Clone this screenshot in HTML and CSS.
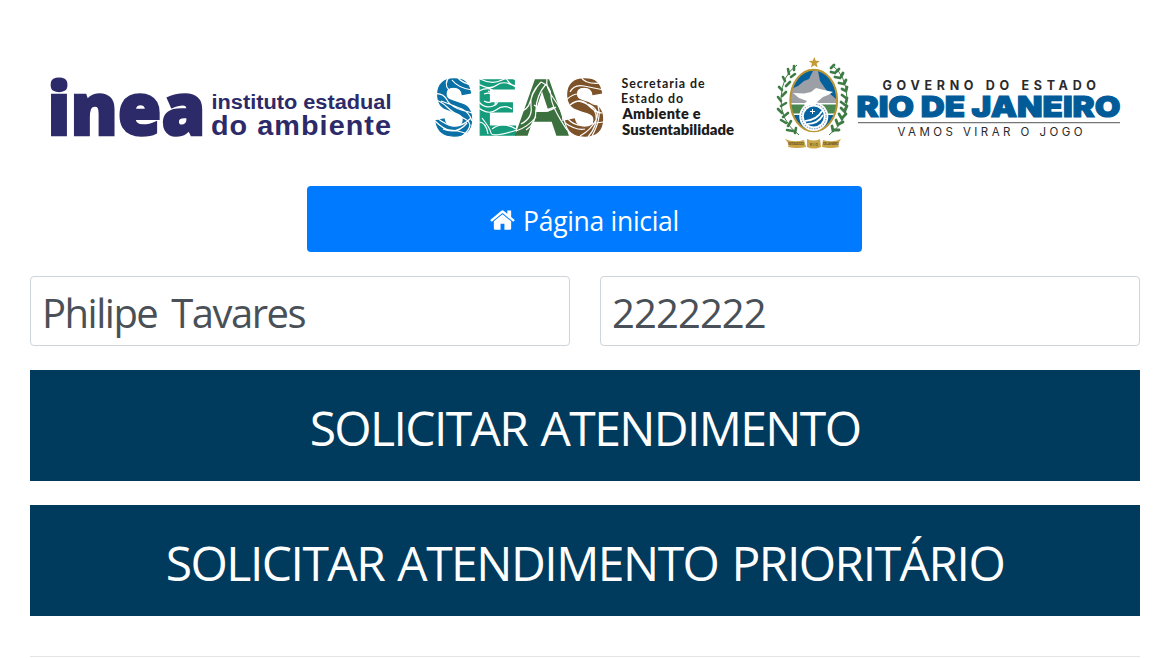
FILE: index.html
```html
<!DOCTYPE html>
<html lang="pt-BR">
<head>
<meta charset="utf-8">
<title>Solicitar atendimento</title>
<link rel="stylesheet" href="styles.css">
</head>
<body>
<main class="page">
  <header class="logos">
    <svg class="logo-inea" viewBox="50 50 343 105" role="img" aria-label="inea">
      <g fill="#2d2a69">
        <text class="inea-name" x="47.5" y="134.5" textLength="158" lengthAdjust="spacingAndGlyphs">inea</text>
        <text class="inea-sub" x="211.5" y="108.5" font-size="20" textLength="180" lengthAdjust="spacingAndGlyphs">instituto estadual</text>
        <text class="inea-sub" x="211" y="134.500" font-size="27.5" letter-spacing="1" textLength="181" lengthAdjust="spacingAndGlyphs">do ambiente</text>
      </g>
    </svg>
    <svg class="logo-seas" viewBox="434 50 302 105" role="img" aria-label="SEAS">
      <g class="seas-name">
        <text x="434" y="135" fill="#0b70a6" stroke="#0b70a6" textLength="40" lengthAdjust="spacingAndGlyphs">S</text>
        <text x="476" y="135" fill="#159c7c" stroke="#159c7c" textLength="42" lengthAdjust="spacingAndGlyphs">E</text>
        <text x="514" y="135" fill="#3c713f" stroke="#3c713f" textLength="56" lengthAdjust="spacingAndGlyphs">A</text>
        <text x="564" y="135" fill="#7d5229" stroke="#7d5229" textLength="41" lengthAdjust="spacingAndGlyphs">S</text>
      </g>
      <g fill="none" stroke="#fff" stroke-width="1.2">
        <path d="M433 94q10-2 14 6t22 12 2 26M433 99q8 2 14 8t18 12-6 20M441 101q14 5 21 8t10 12M450 76q-7 8-1 14M452 80q6 8 20 10M458 78q5 6 16 7M434 120q10 10 16 10t18 4M437 118q10 8 18 8t16-8M443 129q14 6 24-6"/>
        <path d="M477 83q12 8 20 2t22 4M480 79q12 6 22 1t16 2M479 91q12-6 17 3t-3 12-14-4M484 94q8-3 8 4t-8 3M488 91q9 4 7 14M476 106q12 10 20 4t16-1M482 118q8 10 9 15t26-3M488 134q-2-12-9-12M492 129q10-8 24 0M506 78q4 8 12 8"/>
        <path d="M521 124q12-6 10-18t10-24M526 130q10-6 10-20t10-26M519 112q9-2 11-10t7-15M516 131q12-4 20-14M541 82q10 4 10 14t16 34M547 79q-2 8 7 20t9 22M534 105q10 8 20 2M536 111q12 2 20-4"/>
        <path d="M570 92q4-8 14-6t20 4M567 99q12-10 20 0t16 2M570 105q10-8 18 0t14 8M581 77q4 8 22 6M578 101q16 4 18 14t-8 22M588 104q13 6 8 16t-16 16M598 106q4 12-6 30M565 123q12 8 20 6M567 118q8 9 18 7t18-3"/>
      </g>
      <g class="seas-sub" fill="#1c1c1c">
        <text x="621.5" y="87.5" font-size="12.4" font-weight="700" textLength="83">Secretaria de</text>
        <text x="621" y="102.5" font-size="12.4" font-weight="700" textLength="62">Estado do</text>
        <text x="622.5" y="119" font-size="14.5" font-weight="800" textLength="78">Ambiente e</text>
        <text x="622" y="135" font-size="14.5" font-weight="800" textLength="112" lengthAdjust="spacingAndGlyphs">Sustentabilidade</text>
      </g>
    </svg>
    <svg class="logo-rio" viewBox="777 50 344 105" role="img" aria-label="Governo do Estado do Rio de Janeiro">
      <defs>
        <clipPath id="oval"><ellipse cx="813.7" cy="100.5" rx="23" ry="30.5"/></clipPath>
      </defs>
      <g clip-path="url(#oval)">
        <path fill="#05609c" d="M789 68h50v70h-50z"/>
        <path fill="#9d9fa6" d="M789 103v-13l9-4 6-5 5-2 4-8h5l2 10 7 10 10 9v3z"/>
        <path fill="#4b8750" d="M789 104h50v10h-50z"/>
        <path fill="#fff" d="M789 103h50v1.6h-50zM789 113.5h50v1.6h-50z"/>
      </g>
      <ellipse cx="813.7" cy="100.5" rx="23.4" ry="30.8" fill="none" stroke="#b89532" stroke-width="2"/>
      <circle cx="813.8" cy="116.5" r="14.5" fill="#fff"/>
      <circle cx="813.8" cy="116.5" r="12.3" fill="none" stroke="#8da8c4" stroke-width="1.2" stroke-dasharray="1.5 1"/>
      <circle cx="813.8" cy="116.5" r="10" fill="#0863a0"/>
      <path d="M805 121q12-1 17-10M807 124q11 0 16-9" stroke="#fff" stroke-width="1.7" fill="none"/>
      <path d="M812.5 109v5M810 111.5h5" stroke="#fff"/>
      <path fill="#fff" d="M793 93l11 .5 7-1.5 5-4 8 2 9 2-5 3-5 2-6 5-2 4-5-1-4 2-2-3 3-3-8-3z"/>
      <path fill="#c39b35" d="M814.3 57l1.5 3.8 4 .2-3.2 2.5 1.1 4-3.4-2.3-3.5 2.3 1.2-4-3.2-2.5 4-.2z"/>
      <g fill="none" stroke="#3f7c45" stroke-width="1">
        <path d="M799 135q-19-14-18-37t16-33M829 135q19-14 18-37t-15-33"/>
        <path stroke-width="2.6" stroke-linecap="round" d="M794 70v-4M789 74l-1-5M791 77l4-3M785 81l-2-4M786 86l4-4M782 90l-3-3M782 96l4-4M781 101l-3-4M781 106l5-3M782 113l-4-4M783 117l5-4M786 123l-5-3M788 126l3-5M793 131l-6-1M795 133l1-5"/>
        <path stroke-width="2.8" stroke-linecap="round" d="M831 68l3-3M835 73l-4-1M836 72l3-3M840 78l-5-1M841 77l2-4M844 84l-5-1M844 84l2-4M846 91l-4-2M846 91l1-4M846 98l-4-3M845 105l-4-3M846 102l1-4M845 112l-4-4M845 110l2-4M842 119l-3-5M843 117l3-3M838 125l-2-5M839 124l4-2M833 131l-1-5M834 130l5 0"/>
      </g>
      <path fill="#c9a546" d="M785 139q9 4 19 1l2 7q-9 2-18 0l1-3zM807 139q7 3 13 0l1 8q-7 3-14 0zM823 140q10 3 18-1l-3 5 1 3q-9 2-17 0z"/>
      <g class="ribbon" fill="#715c28">
        <text x="788" y="145" textLength="16">ESTADO DO</text>
        <text x="810" y="146" textLength="8">RIO</text>
        <text x="823" y="145" textLength="16">DE JANEIRO</text>
      </g>
      <g class="rio-text">
        <text x="882.5" y="89.7" font-size="12.5" font-weight="700" fill="#2c2a2c" textLength="213.5">GOVERNO DO ESTADO</text>
        <text x="856.5" y="116.5" font-size="29" font-weight="900" fill="#005b98" stroke="#005b98" stroke-width="1.1" textLength="264" lengthAdjust="spacingAndGlyphs">RIO DE JANEIRO</text>
        <path d="M858 122.7h262" stroke="#747678" stroke-width="1.2"/>
        <text x="897.5" y="136" font-size="11.5" fill="#2c2a2c" textLength="185">VAMOS VIRAR O JOGO</text>
      </g>
    </svg>
  </header>
  <a class="home" href="#">
    <svg class="home-icon" viewBox="0 253 1664 1283"><path fill="#fff" d="M1408 992v480q0 26-19 45t-45 19H960v-384H704v384H320q-26 0-45-19t-19-45V992q0-1 .5-3t.5-3l575-474 575 474q1 2 1 6zm223-69l-62 74q-8 9-21 11h-3q-13 0-21-7L832 424l-692 577q-12 8-24 7-13-2-21-11l-62-74q-8-10-7-23.5t11-21.5l719-599q32-26 76-26t76 26l244 204V288q0-14 9-23t23-9h192q14 0 23 9t9 23v408l219 182q10 8 11 21.5t-7 23.5z"/></svg>
    <span class="home-label">Página inicial</span>
  </a>
  <form class="form">
    <div class="fields">
      <input class="field name" type="text" value="Philipe Tavares" aria-label="Nome">
      <input class="field number" type="text" value="2222222" aria-label="Número">
    </div>
    <button class="request" type="button"><span class="normal">SOLICITAR ATENDIMENTO</span></button>
    <button class="request" type="button"><span class="priority">SOLICITAR ATENDIMENTO PRIORITÁRIO</span></button>
  </form>
  <hr class="divider">
</main>
</body>
</html>
```
FILE: styles.css
```css
* { box-sizing: border-box; }
body { margin: 0; background: #fff; overflow: hidden; font-family: "Open Sans", "Noto Sans", sans-serif; }
.page { width: 1110px; margin-left: 30px; }
.logos { height: 186px; padding: 50px 19px 0 20px; display: flex; justify-content: space-between; align-items: flex-start; }
.logos svg { height: 105px; overflow: visible; }
.logo-inea { width: 343px; }
.logo-seas { width: 302px; }
.logo-rio { width: 344px; }
.inea-name { font: 800 73px "Open Sans", sans-serif; stroke: #2d2a69; stroke-width: 2.5px; }
.inea-sub { font-family: "Liberation Sans", sans-serif; font-weight: 700; }
.seas-name { font: 700 79px "Liberation Sans", sans-serif; stroke-width: 1.4px; }
.seas-sub { font-family: Lato, sans-serif; }
.rio-text { font-family: Inter, sans-serif; }
.ribbon { font: 700 3.5px Inter, sans-serif; }
.home { display: flex; justify-content: center; align-items: center; gap: 8px; width: 555px; height: 66px; padding-top: 2px; margin-left: 277px; background: #007bff; border-radius: 4px; color: #fff; text-decoration: none; font-size: 26.5px; }
.home-icon { width: 25px; height: 20px; }
.home-label { line-height: 1; padding-top: 2px; letter-spacing: -0.3px; }
.form { display: flex; flex-direction: column; gap: 24px; margin-top: 24px; }
.fields { display: grid; grid-template-columns: 1fr 1fr; gap: 30px; }
.field { width: 100%; min-width: 0; height: 70px; padding: 3px 12px 0; border: 1px solid #ced4da; border-radius: 4px; background: #fff; color: #495057; font-family: inherit; font-size: 40px; outline: 0; }
.name { padding-left: 11px; letter-spacing: -1.5px; word-spacing: 5px; }
.number { padding-left: 11px; letter-spacing: -0.9px; }
.request { height: 111px; padding: 3px 0 0; border: 0; background: #003a5d; color: #fff; font-family: inherit; font-size: 48px; text-align: center; white-space: nowrap; }
.normal { letter-spacing: -1.62px; word-spacing: 2.5px; }
.priority { letter-spacing: -1.5px; word-spacing: 2px; }
.divider { margin: 40px 0 0; border: 0; border-top: 1px solid #e5e5e5; }
```
